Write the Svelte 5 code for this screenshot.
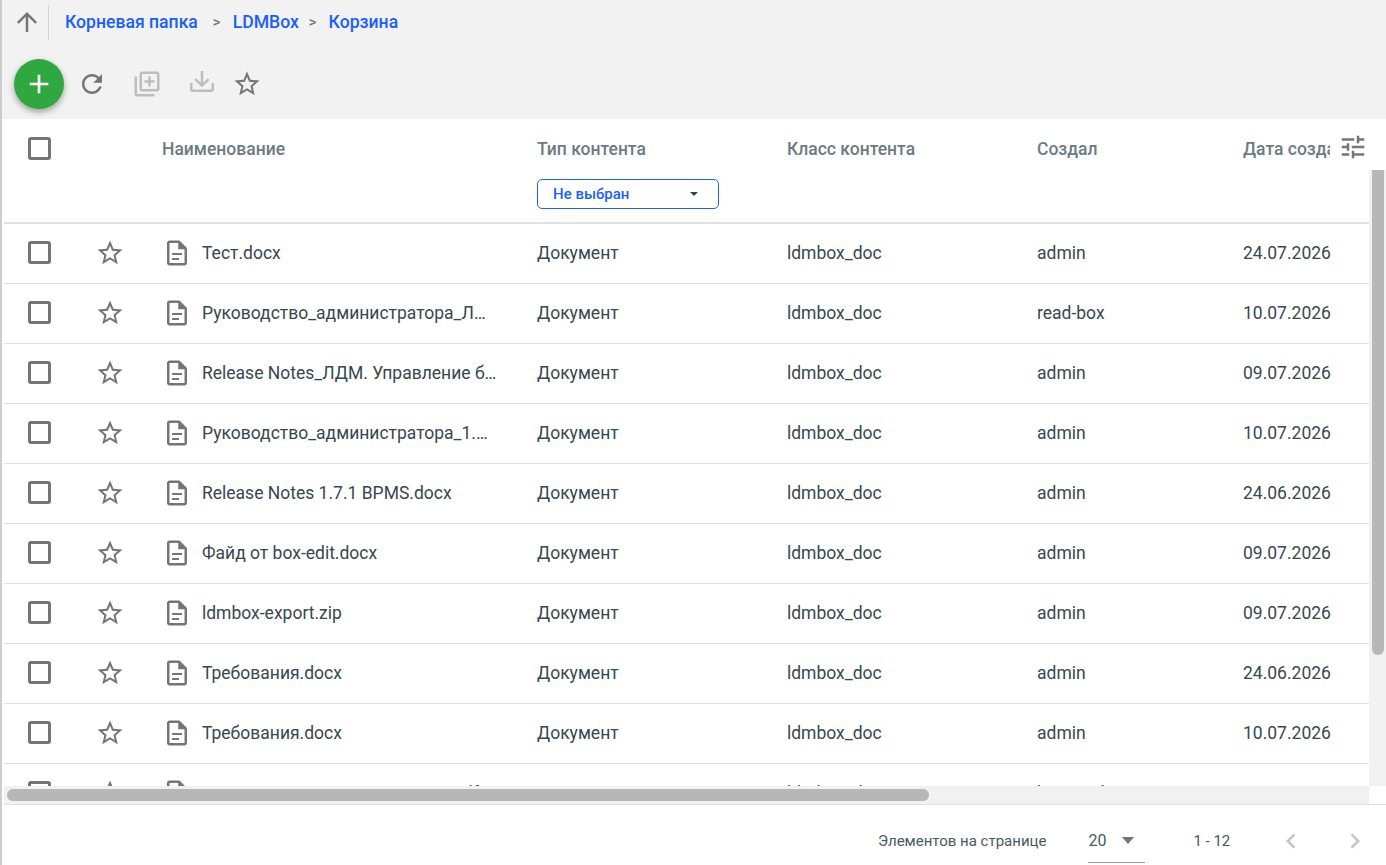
<script>
  const rows = [
    ['Тест.docx', 'admin', '24.07.2026'],
    ['Руководство_администратора_ЛДМ_Управление_контентом.docx', 'read-box', '10.07.2026'],
    ['Release Notes_ЛДМ. Управление бизнес-процессами.docx', 'admin', '09.07.2026'],
    ['Руководство_администратора_1.7.1_BPMS.docx', 'admin', '10.07.2026'],
    ['Release Notes 1.7.1 BPMS.docx', 'admin', '24.06.2026'],
    ['Файд от box-edit.docx', 'admin', '09.07.2026'],
    ['ldmbox-export.zip', 'admin', '09.07.2026'],
    ['Требования.docx', 'admin', '24.06.2026'],
    ['Требования.docx', 'admin', '10.07.2026'],
    ['Руководство_пользователя_1.pdf', 'box-read', '09.07.2026'],
    ['Требования.docx', 'admin', '09.07.2026'],
    ['Тест.docx', 'admin', '24.06.2026']
  ];
  const star = 'M22 9.24l-7.19-.62L12 2 9.19 8.63 2 9.24l5.46 4.73L5.82 21 12 17.27 18.18 21l-1.63-7.03L22 9.24zM12 15.4l-3.76 2.27 1-4.28-3.32-2.88 4.38-.38L12 6.1l1.71 4.04 4.38.38-3.32 2.88 1 4.28L12 15.4z';
  const doc = 'M14 2H6c-1.1 0-2 .9-2 2v16c0 1.1.89 2 1.99 2H18c1.1 0 2-.9 2-2V8l-6-6zm4 18H6V4h7v5h5v11zM8 12h8v1.6H8zm0 4h5.6v1.6H8z';
</script>

<div class="page">
  <header class="top">
    <nav class="crumbs">
      <span class="up">
        <svg viewBox="0 0 24 24" width="30" height="30"><path d="M4 12l1.41 1.41L11 7.83V20h2V7.83l5.58 5.59L20 12l-8-8-8 8z"/></svg>
      </span>
      <a href="#a" class="first">Корневая папка</a>
      <span class="sep">&gt;</span>
      <a href="#b">LDMBox</a>
      <span class="sep">&gt;</span>
      <a href="#c">Корзина</a>
    </nav>
    <div class="tools">
      <button class="fab" aria-label="add">
        <svg viewBox="0 0 24 24" width="32" height="32"><path d="M19 13h-6v6h-2v-6H5v-2h6V5h2v6h6v2z"/></svg>
      </button>
      <svg class="t refresh" viewBox="0 0 24 24" width="30" height="30"><path d="M17.65 6.35C16.2 4.9 14.21 4 12 4c-4.42 0-7.99 3.58-7.99 8s3.57 8 7.99 8c3.73 0 6.84-2.55 7.73-6h-2.08c-.82 2.33-3.04 4-5.65 4-3.31 0-6-2.69-6-6s2.69-6 6-6c1.66 0 3.14.69 4.22 1.78L13 11h7V4l-2.35 2.35z"/></svg>
      <svg class="t dis add" viewBox="0 0 24 24" width="30" height="30"><path d="M4 6H2v14c0 1.1.9 2 2 2h14v-2H4V6zm16-4H8c-1.1 0-2 .9-2 2v12c0 1.1.9 2 2 2h12c1.1 0 2-.9 2-2V4c0-1.1-.9-2-2-2zm0 14H8V4h12v12zm-7-2h2v-3h3V9h-3V6h-2v3h-3v2h3z"/></svg>
      <svg class="t dis load" viewBox="0 0 24 24" width="30" height="30"><path d="M19.6 11.2v5.2H4.4v-5.2H2.4v5.2c0 1.1.9 2 2 2h15.2c1.1 0 2-.9 2-2v-5.2zM11 1.6h2v9.4l3.6-3.6L18 8.8l-6 5.8-6-5.8 1.4-1.4L11 11z"/></svg>
      <svg class="t fav" viewBox="0 0 24 24" width="30" height="30"><path d={star}/></svg>
    </div>
  </header>

  <div class="grid">
    <div class="scroller">
      <div class="table">
        <div class="row head">
          <div class="c check"><span class="box"></span></div>
          <div class="c fav-col"></div>
          <div class="c name"><span>Наименование</span></div>
          <div class="c type">
            <span>Тип контента</span>
            <button class="select"><span>Не выбран</span><i class="caret"></i></button>
          </div>
          <div class="c cls"><span>Класс контента</span></div>
          <div class="c author"><span>Создал</span></div>
          <div class="c date"><span>Дата создания</span></div>
        </div>
        {#each rows as r}
          <div class="row">
            <div class="c check"><span class="box"></span></div>
            <div class="c fav-col"><svg viewBox="0 0 24 24" width="30" height="30"><path d={star}/></svg></div>
            <div class="c name">
              <svg viewBox="0 0 24 24" width="30" height="30"><path d={doc}/></svg>
              <span class="file">{r[0]}</span>
            </div>
            <div class="c type"><span>Документ</span></div>
            <div class="c cls"><span>ldmbox_doc</span></div>
            <div class="c author"><span>{r[1]}</span></div>
            <div class="c date"><span>{r[2]}</span></div>
          </div>
        {/each}
      </div>
    </div>
    <div class="vbar"><div class="vthumb"></div></div>
    <div class="hbar"><div class="hthumb"></div></div>
    <div class="corner"></div>
  </div>

  <div class="settings">
    <svg viewBox="0 0 24 24" width="30" height="30"><path d="M3 17v2h6v-2H3zM3 5v2h10V5H3zm10 16v-2h8v-2h-8v-2h-2v6h2zM7 9v2H3v2h4v2h2V9H7zm14 4v-2H11v2h10zm-6-4h2V7h4V5h-4V3h-2v6z"/></svg>
  </div>

  <footer class="pager">
    <span class="label">Элементов на странице</span>
    <span class="size"><span>20</span><i></i></span>
    <span class="range">1 - 12</span>
    <svg class="nav prev" viewBox="0 0 24 24" width="30" height="30"><path d="M15.41 7.41L14 6l-6 6 6 6 1.41-1.41L10.83 12z"/></svg>
    <svg class="nav next" viewBox="0 0 24 24" width="30" height="30"><path d="M10 6L8.59 7.41 13.17 12l-4.58 4.59L10 18l6-6z"/></svg>
  </footer>
</div>

<style>
  :global(body) {
    margin: 0;
    background: #fff;
    font-family: Roboto, "Liberation Sans", sans-serif;
    overflow: hidden;
  }
  .page {
    position: relative;
    height: 865px;
    box-sizing: border-box;
    border-left: 2px solid #ccc;
    padding-left: 2px;
    display: flex;
    flex-direction: column;
  }
  .top {
    height: 119px;
    background: #f2f2f2;
    flex: none;
    margin-left: -2px;
    padding-left: 2px;
  }
  .crumbs {
    display: flex;
    align-items: center;
    height: 44px;
    font-size: 17.6px;
    font-weight: 500;
  }
  .crumbs a {
    color: #1a5eff;
    text-decoration: none;
  }
  .up {
    width: 45px;
    height: 35px;
    padding-left: 2px;
    display: flex;
    align-items: center;
    justify-content: center;
    border-right: 1px solid #d5d5d5;
    margin-right: 16px;
    box-sizing: border-box;
  }
  .up svg { fill: #757575; flex: none; }
  .sep {
    color: #757575;
    font-weight: 500;
    font-size: 15px;
    margin: 0 12px 0 10px;
  }
  .first + .sep { margin-left: 15px; }
  .tools {
    display: flex;
    align-items: center;
    height: 50px;
    margin-top: 15px;
    padding-left: 10px;
  }
  .fab {
    width: 50px;
    height: 50px;
    border: 0;
    padding: 0;
    border-radius: 50%;
    background: #2ea83f;
    box-shadow: 0 3px 6px rgba(0,0,0,.35);
    display: flex;
    align-items: center;
    justify-content: center;
  }
  .fab svg { fill: #fff; }
  .t { fill: #757575; flex: none; }
  .dis { fill: #bdbdbd; }
  .refresh { margin-left: 13px; }
  .add { margin-left: 25px; }
  .load { margin-left: 25px; }
  .fav { margin-left: 15px; }
  .grid {
    display: grid;
    grid-template-columns: 1fr 17px;
    grid-template-rows: 667px 18px;
    flex: none;
    border-bottom: 1px solid #e0e0e0;
  }
  .scroller { overflow: hidden; }
  .vbar {
    margin-top: 51px;
    background: #f1f1f1;
    padding: 0 2px 0 3px;
  }
  .vthumb { height: 485px; background: #b7b7b7; border-radius: 0 0 6px 6px; }
  .hbar {
    background: #f1f1f1;
    padding: 3px;
  }
  .hthumb { width: 922px; height: 12px; background: #b7b7b7; border-radius: 6px; }
  .corner { background: #fff; }
  .table { width: 2010px; }
  .row {
    display: flex;
    height: 60px;
    box-sizing: border-box;
    border-bottom: 1px solid #e0e0e0;
    padding-bottom: 2px;
    align-items: center;
    font-size: 17.5px;
    color: #37474f;
  }
  .head {
    height: 105px;
    border-bottom: 2px solid #e0e0e0;
    padding: 18px 0 0;
    align-items: flex-start;
    color: #6c7b83;
    font-weight: 500;
    line-height: 25px;
  }
  .c { flex: none; box-sizing: border-box; white-space: nowrap; overflow: hidden; }
  .check { width: 68px; padding-left: 24px; display: flex; }
  .box {
    width: 23px;
    height: 23px;
    box-sizing: border-box;
    border: 3px solid #757575;
    border-radius: 3px;
    display: block;
  }
  .fav-col { width: 90px; display: flex; padding-left: 23px; }
  .fav-col svg { fill: #757575; }
  .name { width: 375px; display: flex; align-items: center; gap: 10px; }
  .name svg { fill: #757575; flex: none; }
  .file {
    width: 295px;
    overflow: hidden;
    text-overflow: ellipsis;
  }
  .type { width: 250px; }
  .cls { width: 250px; }
  .author { width: 206px; }
  .date { width: 300px; }
  .select {
    display: flex;
    align-items: center;
    justify-content: space-between;
    width: 182px;
    height: 30px;
    margin-top: 17px;
    padding: 0 20px 0 15px;
    box-sizing: border-box;
    background: #fff;
    border: 1px solid #1a5eff;
    border-radius: 5px;
    color: #1a5eff;
    font: 500 15px Roboto, sans-serif;
  }
  .caret {
    width: 0;
    height: 0;
    border: 4px solid transparent;
    border-top: 4px solid #37474f;
    border-bottom: 0;
  }
  .settings {
    position: absolute;
    left: 1328px;
    top: 119px;
    width: 45px;
    height: 50px;
    box-sizing: border-box;
    padding-top: 6px;
    background: #fff;
    display: flex;
    align-items: center;
    justify-content: center;
  }
  .settings svg { fill: #757575; }
  .pager {
    flex: 1;
    display: flex;
    align-items: center;
    padding-top: 12px;
    font-size: 15px;
    color: #455a64;
  }
  .label { margin-left: 874px; }
  .size {
    margin-left: 42px;
    width: 57px;
    height: 43px;
    box-sizing: border-box;
    border-bottom: 1px solid #9e9e9e;
    display: flex;
    align-items: center;
    gap: 16px;
    font-size: 16px;
  }
  .size i {
    width: 0;
    height: 0;
    border: 6.5px solid transparent;
    border-top: 7px solid #757575;
    border-bottom: 0;
  }
  .range { margin-left: 48px; }
  .nav { fill: #c4c4c4; }
  .prev { margin-left: 46px; }
  .next { margin-left: 34px; }
</style>
